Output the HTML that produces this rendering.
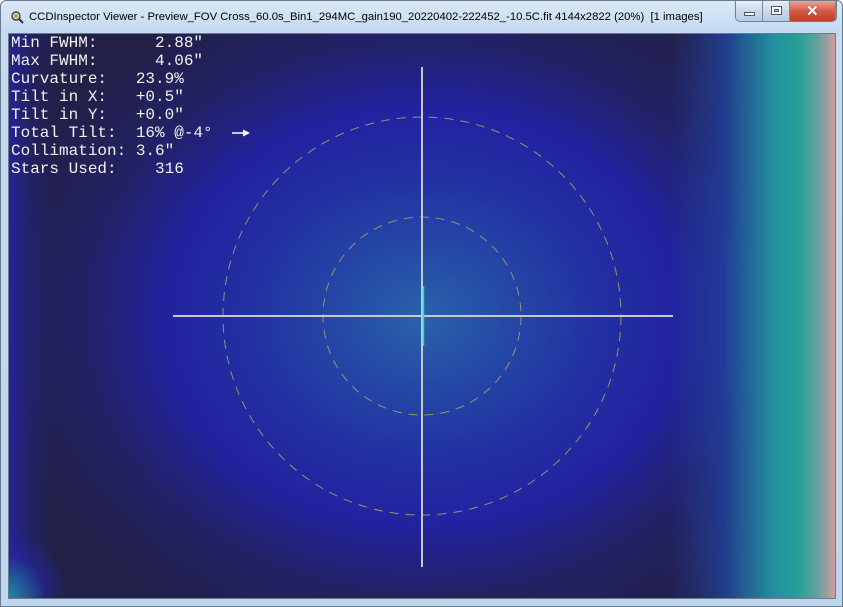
<!DOCTYPE html>
<html><head><style>
*{margin:0;padding:0;box-sizing:border-box}
body{width:843px;height:607px;overflow:hidden;background:#fff;font-family:"Liberation Sans",sans-serif}
.win{position:absolute;left:0;top:0;width:843px;height:607px;background:linear-gradient(#dbe8f6,#c4dbf2 30px,#bcd7f1);border:1px solid #6b7b8d;border-radius:6px 6px 0 0}
.title{position:absolute;left:28px;top:10px;font-size:11.3px;color:#000;white-space:nowrap}
.icon{position:absolute;left:9px;top:9px;width:14px;height:14px}
.btns{position:absolute;left:734px;top:0;height:21px;width:102px;border:1px solid #6f7f90;border-top:none;border-radius:0 0 5px 5px;overflow:hidden;display:flex}
.b{height:100%;background:linear-gradient(#e6eef8,#c9d8ea 50%,#b9cbe0);border-right:1px solid #7a8a9c;position:relative}
.c{background:linear-gradient(#e8a79a,#d45a44 50%,#c1402a);flex:1}
.client{position:absolute;left:7px;top:32px;width:828px;height:566px;border:1px solid #707880;overflow:hidden;
background:
linear-gradient(90deg,rgba(0,0,0,0) 0,rgba(0,0,0,0) 660px,rgba(34,70,165,0.7) 715px,#2290a0 765px,#28a098 790px,#6aa0a0 810px,#e09c9c 828px),
linear-gradient(90deg,rgba(36,36,165,0.85) 0,rgba(36,36,165,0.3) 20px,rgba(0,0,0,0) 45px),
radial-gradient(ellipse 440px 360px at 414px 283px,#2a62aa 0,#2448a6 20%,#2230a2 40%,#2222a0 58%,rgba(34,34,120,0.6) 78%,rgba(34,34,80,0) 100%),
#222046}
.bl{position:absolute;left:0;bottom:0;width:60px;height:80px;background:radial-gradient(ellipse 60px 70px at 0 80px,#1f8aa0,rgba(36,40,160,0.6) 60%,rgba(0,0,0,0))}
pre{position:absolute;left:2px;top:0px;font-family:"Liberation Mono",monospace;font-size:16px;line-height:18px;color:#f0f0f0}
</style></head><body>
<div class="win">
<svg class="icon" viewBox="0 0 14 14"><circle cx="6" cy="6" r="4" fill="none" stroke="#444" stroke-width="1.5"/><path d="M9 9l4 4" stroke="#333" stroke-width="2"/><circle cx="6" cy="6" r="2" fill="#c8a020"/></svg>
<div class="title">CCDInspector Viewer - Preview_FOV Cross_60.0s_Bin1_294MC_gain190_20220402-222452_-10.5C.fit 4144x2822 (20%)&nbsp; [1 images]</div>
<div class="btns">
<div class="b" style="width:27px"><div style="position:absolute;left:8px;top:11px;width:11px;height:4px;background:#fff;border:1px solid #556"></div></div>
<div class="b" style="width:27px"><div style="position:absolute;left:8px;top:5px;width:11px;height:9px;border:1px solid #556;background:#fff"><div style="margin:2px;height:3px;border:1px solid #556;background:#bcd"></div></div></div>
<div class="b c"><div style="position:absolute;left:16px;top:1px;color:#fff;font-weight:bold;font-size:15px;text-shadow:0 0 1px #333">✕</div></div>
</div>
<div class="client">
<div class="bl"></div>
<svg width="828" height="566" style="position:absolute;left:0;top:0">
<g transform="translate(-8,-33)">
<circle cx="421" cy="315" r="199" fill="none" stroke="#9a9070" stroke-width="1" stroke-dasharray="9,7"/>
<circle cx="421" cy="315" r="99" fill="none" stroke="#9a9070" stroke-width="1" stroke-dasharray="9,7"/>
<line x1="421" y1="66" x2="421" y2="566" stroke="#c8c8c8" stroke-width="2"/>
<line x1="172" y1="315" x2="672" y2="315" stroke="#c8c8c8" stroke-width="2"/>
<line x1="422.5" y1="285" x2="422.5" y2="345" stroke="#00e8f0" stroke-width="1.5"/>
<line x1="231" y1="132" x2="243" y2="132" stroke="#fff" stroke-width="1.5"/>
<path d="M242 128.5L249 132L242 135.5Z" fill="#fff"/>
</g>
</svg>
<pre>Min FWHM:      2.88"
Max FWHM:      4.06"
Curvature:   23.9%
Tilt in X:   +0.5"
Tilt in Y:   +0.0"
Total Tilt:  16% @-4°
Collimation: 3.6"
Stars Used:    316</pre>
</div>
</div>
</body></html>
